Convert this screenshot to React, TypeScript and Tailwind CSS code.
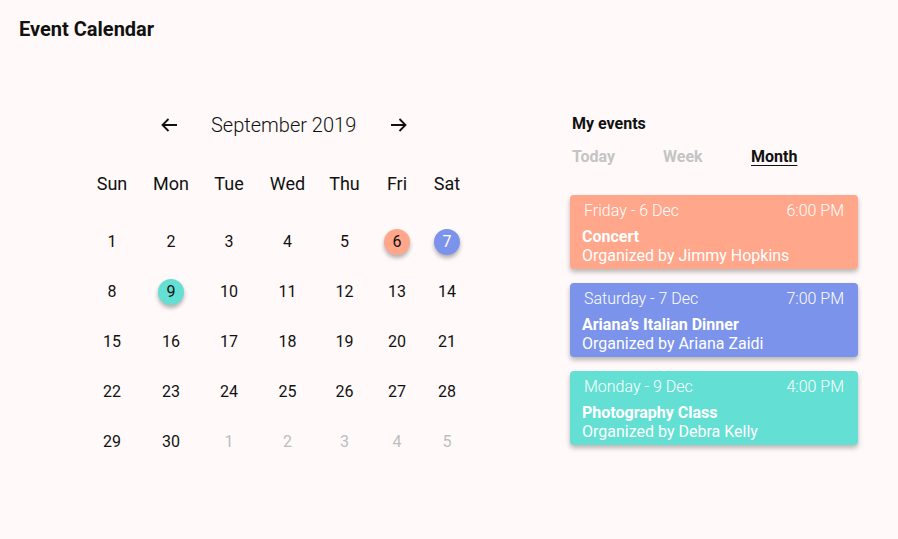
import React from "react";

type Day = { n: number; muted?: boolean; mark?: "salmon" | "blue" | "teal" };

const weekdays = ["Sun", "Mon", "Tue", "Wed", "Thu", "Fri", "Sat"];

const weeks: Day[][] = [
  [{ n: 1 }, { n: 2 }, { n: 3 }, { n: 4 }, { n: 5 }, { n: 6, mark: "salmon" }, { n: 7, mark: "blue" }],
  [{ n: 8 }, { n: 9, mark: "teal" }, { n: 10 }, { n: 11 }, { n: 12 }, { n: 13 }, { n: 14 }],
  [{ n: 15 }, { n: 16 }, { n: 17 }, { n: 18 }, { n: 19 }, { n: 20 }, { n: 21 }],
  [{ n: 22 }, { n: 23 }, { n: 24 }, { n: 25 }, { n: 26 }, { n: 27 }, { n: 28 }],
  [
    { n: 29 },
    { n: 30 },
    { n: 1, muted: true },
    { n: 2, muted: true },
    { n: 3, muted: true },
    { n: 4, muted: true },
    { n: 5, muted: true },
  ],
];

const events = [
  {
    date: "Friday - 6 Dec",
    time: "6:00 PM",
    title: "Concert",
    by: "Organized by Jimmy Hopkins",
    bg: "bg-[#ffa68b]",
  },
  {
    date: "Saturday - 7 Dec",
    time: "7:00 PM",
    title: "Ariana’s Italian Dinner",
    by: "Organized by Ariana Zaidi",
    bg: "bg-[#7b93ea]",
  },
  {
    date: "Monday - 9 Dec",
    time: "4:00 PM",
    title: "Photography Class",
    by: "Organized by Debra Kelly",
    bg: "bg-[#63e0d3]",
  },
];

const Arrow = ({ dir }: { dir: "left" | "right" }) => (
  <svg width="18" height="16" viewBox="0 0 18 16" fill="none" stroke="#111" strokeWidth="1.8">
    {dir === "left" ? (
      <path d="M17 8H2.5M8.5 2L2.5 8l6 6" />
    ) : (
      <path d="M1 8h14.5M9.5 2l6 6-6 6" />
    )}
  </svg>
);

function DayCell({ day }: { day: Day }) {
  if (day.mark) {
    const color =
      day.mark === "salmon"
        ? "bg-[#ffa68b] text-[#111]"
        : day.mark === "blue"
        ? "bg-[#7b93ea] text-white"
        : "bg-[#63e0d3] text-[#111]";
    return (
      <div className="flex items-center justify-center">
        <span
          className={`flex h-[26px] w-[26px] items-center justify-center rounded-full shadow-[0_3px_4px_rgba(0,0,0,0.3)] ${color}`}
        >
          {day.n}
        </span>
      </div>
    );
  }
  return (
    <div className={`flex items-center justify-center ${day.muted ? "text-[#bdbdbd]" : "text-[#111]"}`}>
      {day.n}
    </div>
  );
}

export default function App() {
  return (
    <div className="h-[539px] w-[898px] bg-[#fffaf9] font-['Roboto',sans-serif] text-[#111]">
      <h1 className="pl-[19px] pt-[18px] text-[20px] font-bold leading-[22px]">Event Calendar</h1>

      <div className="flex">
        {/* Calendar */}
        <div className="ml-[82px] mt-[71px] w-[390px]">
          <div className="flex h-[28px] items-center pl-[78px]">
            <Arrow dir="left" />
            <span className="ml-[33px] text-[20px] font-light leading-[28px]">September 2019</span>
            <span className="ml-[34px]">
              <Arrow dir="right" />
            </span>
          </div>

          <div className="mt-[31px] grid h-[24px] grid-cols-[60px_58px_58px_59px_55px_50px_50px] items-center text-[18px]">
            {weekdays.map((d) => (
              <div key={d} className="text-center">
                {d}
              </div>
            ))}
          </div>

          <div className="mt-[23px]">
            {weeks.map((week, i) => (
              <div key={i} className="grid h-[50px] grid-cols-[60px_58px_58px_59px_55px_50px_50px] items-center text-[16px]">
                {week.map((day, j) => (
                  <DayCell key={j} day={day} />
                ))}
              </div>
            ))}
          </div>
        </div>

        {/* My events */}
        <div className="ml-[98px] mt-[74px] w-[288px]">
          <h2 className="pl-[2px] text-[16px] font-bold leading-[20px]">My events</h2>
          <div className="mt-[13px] flex h-[20px] items-center pl-[2px] text-[16px] font-bold">
            <span className="w-[91px] text-[#c4c4c4]">Today</span>
            <span className="w-[88px] text-[#c4c4c4]">Week</span>
            <span className="underline underline-offset-[3px]">Month</span>
          </div>

          <div className="mt-[28px] flex flex-col gap-[14px]">
            {events.map((e) => (
              <div
                key={e.title}
                className={`h-[74px] rounded-[4px] pl-[12px] pr-[14px] pt-[7px] text-white shadow-[0_3px_5px_rgba(0,0,0,0.28)] ${e.bg}`}
              >
                <div className="flex h-[18px] items-center justify-between pl-[2px] text-[16px] font-light">
                  <span>{e.date}</span>
                  <span>{e.time}</span>
                </div>
                <div className="mt-[8px] text-[16px] font-bold leading-[18px]">{e.title}</div>
                <div className="text-[16px] leading-[20px]">{e.by}</div>
              </div>
            ))}
          </div>
        </div>
      </div>
    </div>
  );
}
